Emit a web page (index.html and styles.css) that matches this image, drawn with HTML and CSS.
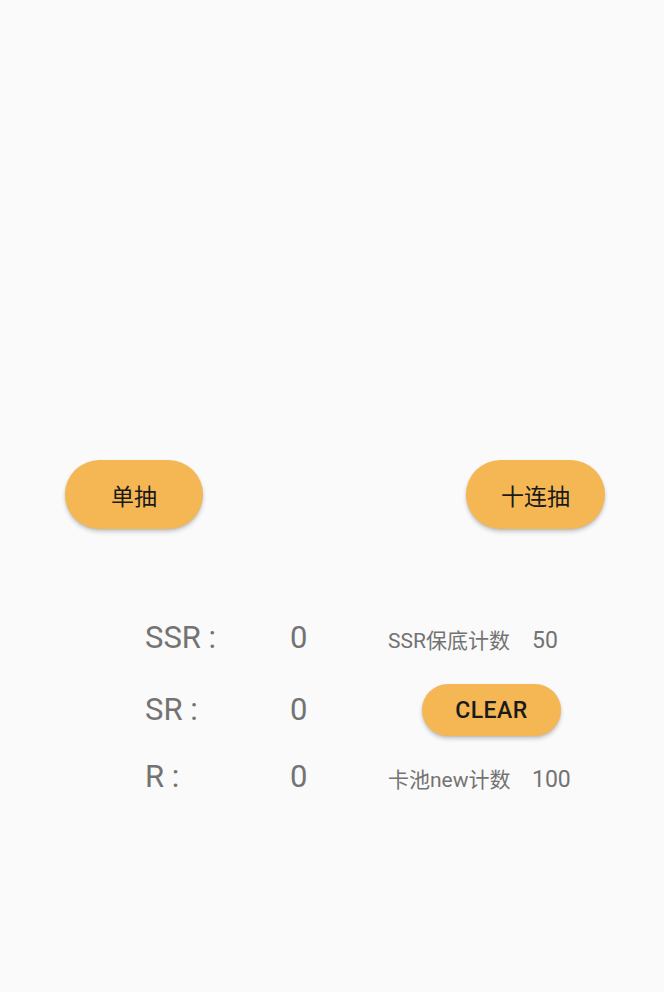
FILE: index.html
```html
<!DOCTYPE html>
<html lang="zh-CN">
<head>
<meta charset="utf-8">
<title>抽卡</title>
<link rel="stylesheet" href="styles.css">
</head>
<body>
<main class="screen">
  <div class="draw-row">
    <button class="pill pill-draw">单抽</button>
    <button class="pill pill-draw pill-wide">十连抽</button>
  </div>
  <section class="stats">
    <div class="row row-ssr">
      <span class="label">SSR :</span>
      <span class="value">0</span>
      <span class="info">SSR保底计数</span>
      <span class="info-value">50</span>
    </div>
    <div class="row row-sr">
      <span class="label">SR :</span>
      <span class="value">0</span>
      <button class="pill pill-clear">CLEAR</button>
    </div>
    <div class="row row-r">
      <span class="label">R :</span>
      <span class="value">0</span>
      <span class="info">卡池new计数</span>
      <span class="info-value">100</span>
    </div>
  </section>
</main>
</body>
</html>
```
FILE: styles.css
```css
html, body {
  margin: 0;
  padding: 0;
  background: #fafafa;
}
body {
  width: 664px;
  height: 992px;
  overflow: hidden;
  font-family: Roboto, "Noto Sans CJK SC", sans-serif;
}
.screen {
  display: flex;
  flex-direction: column;
}
.draw-row {
  display: flex;
  justify-content: space-between;
  align-items: center;
  margin-top: 460px;
  padding: 0 59px 0 65px;
}
.pill {
  border: none;
  background: #f5b754;
  color: #1a1a1a;
  border-radius: 40px;
  font-family: Roboto, "Noto Sans CJK SC", sans-serif;
  padding: 0;
  box-shadow: 0 3px 4px rgba(0, 0, 0, 0.18), 0 1px 2px rgba(0, 0, 0, 0.10);
}
.pill-draw {
  width: 138px;
  height: 69px;
  font-size: 23px;
  font-weight: 400;
}
.pill-wide {
  width: 139px;
}
.stats {
  display: flex;
  flex-direction: column;
  margin-top: 91px;
  padding-left: 145px;
  color: #737373;
}
.row {
  display: flex;
  align-items: baseline;
}
.row-sr {
  align-items: center;
  height: 52px;
  margin-top: 28px;
}
.row-r {
  margin-top: 23px;
}
.label {
  width: 145px;
  font-size: 31px;
  line-height: 36px;
}
.value {
  width: 98px;
  font-size: 31px;
  line-height: 36px;
}
.info {
  width: 144px;
  font-size: 21px;
  line-height: 24px;
}
.info-value {
  font-size: 23px;
  line-height: 24px;
}
.pill-clear {
  width: 139px;
  height: 52px;
  margin-left: 34px;
  font-size: 23px;
  font-weight: 500;
  letter-spacing: 0.5px;
}
```
